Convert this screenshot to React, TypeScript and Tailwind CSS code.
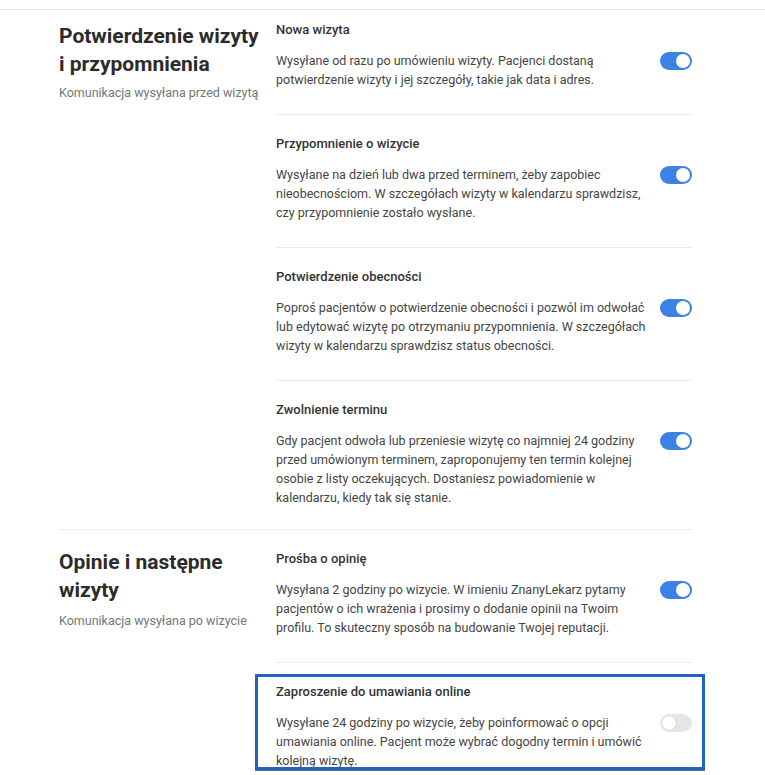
import React from "react";

type Item = { title: string; desc: string; on: boolean; highlight?: boolean };

const Toggle = ({ on }: { on: boolean }) => (
  <div
    className={
      on
        ? "relative mt-[1px] h-[18px] w-[32px] shrink-0 rounded-full bg-[#3b82e4]"
        : "relative mt-[1px] h-[18px] w-[32px] shrink-0 rounded-full bg-[#e3e5e9]"
    }
  >
    <div
      className={
        on
          ? "absolute right-[2px] top-[2px] h-[14px] w-[14px] rounded-full bg-white"
          : "absolute left-[2px] top-[2px] h-[14px] w-[14px] rounded-full bg-white shadow-[0_0_1px_rgba(0,0,0,0.25)]"
      }
    />
  </div>
);

const Row = ({
  item,
  first,
  last,
  sectionLast,
}: {
  item: Item;
  first: boolean;
  last: boolean;
  sectionLast: boolean;
}) => (
  <div
    className={
      (first ? "pt-[10px] " : "pt-[19px] ") +
      (last ? (sectionLast ? "pb-[26px] " : "pb-[22px] ") : "pb-[25px] border-b border-[#ebebeb] ") +
      "relative"
    }
  >
    <div className="text-[13px] leading-[20px] font-medium text-[#333333]">{item.title}</div>
    <div className="mt-[11px] flex items-start justify-between">
      <p className="w-[380px] text-[12.5px] leading-[19px] text-[#454545]">{item.desc}</p>
      <Toggle on={item.on} />
    </div>
    {item.highlight && (
      <div className="pointer-events-none absolute left-[-21px] right-[-13px] top-[11px] h-[96px] border-[3px] border-[#2361c3] shadow-[0_1px_0_#6b6b6b]" />
    )}
  </div>
);

const Section = ({
  title,
  subtitle,
  items,
  first,
}: {
  title: string;
  subtitle: string;
  items: Item[];
  first: boolean;
}) => (
  <div className={first ? "flex" : "flex border-t border-[#ebebeb]"}>
    <div className={first ? "w-[217px] shrink-0 pt-[12px] pr-[12px]" : "w-[217px] shrink-0 pt-[18px] pr-[12px]"}>
      <h2 className="text-[21px] leading-[28px] font-bold text-[#2b2b2b]">{title}</h2>
      <div
        className={
          first
            ? "mt-[5px] whitespace-nowrap text-[12.5px] leading-[20px] text-[#767676]"
            : "mt-[7px] whitespace-nowrap text-[12.5px] leading-[20px] text-[#767676]"
        }
      >
        {subtitle}
      </div>
    </div>
    <div className="w-[416px] shrink-0">
      {items.map((it, i) => (
        <Row
          key={i}
          item={it}
          first={first && i === 0}
          last={i === items.length - 1}
          sectionLast={!first}
        />
      ))}
    </div>
  </div>
);

export default function App() {
  return (
    <div
      className="min-h-[775px] bg-white pt-[9px]"
      style={{ fontFamily: "Roboto, 'Noto Sans', Arial, sans-serif" }}
    >
      <div className="border-t border-[#e3e3e3]">
        <div className="pl-[59px]">
          <div className="w-[633px]">
            <Section
              first
              title="Potwierdzenie wizyty i przypomnienia"
              subtitle="Komunikacja wysyłana przed wizytą"
              items={[
                {
                  title: "Nowa wizyta",
                  desc: "Wysyłane od razu po umówieniu wizyty. Pacjenci dostaną potwierdzenie wizyty i jej szczegóły, takie jak data i adres.",
                  on: true,
                },
                {
                  title: "Przypomnienie o wizycie",
                  desc: "Wysyłane na dzień lub dwa przed terminem, żeby zapobiec nieobecnościom. W szczegółach wizyty w kalendarzu sprawdzisz, czy przypomnienie zostało wysłane.",
                  on: true,
                },
                {
                  title: "Potwierdzenie obecności",
                  desc: "Poproś pacjentów o potwierdzenie obecności i pozwól im odwołać lub edytować wizytę po otrzymaniu przypomnienia. W szczegółach wizyty w kalendarzu sprawdzisz status obecności.",
                  on: true,
                },
                {
                  title: "Zwolnienie terminu",
                  desc: "Gdy pacjent odwoła lub przeniesie wizytę co najmniej 24 godziny przed umówionym terminem, zaproponujemy ten termin kolejnej osobie z listy oczekujących. Dostaniesz powiadomienie w kalendarzu, kiedy tak się stanie.",
                  on: true,
                },
              ]}
            />
            <Section
              first={false}
              title="Opinie i następne wizyty"
              subtitle="Komunikacja wysyłana po wizycie"
              items={[
                {
                  title: "Prośba o opinię",
                  desc: "Wysyłana 2 godziny po wizycie. W imieniu ZnanyLekarz pytamy pacjentów o ich wrażenia i prosimy o dodanie opinii na Twoim profilu. To skuteczny sposób na budowanie Twojej reputacji.",
                  on: true,
                },
                {
                  title: "Zaproszenie do umawiania online",
                  desc: "Wysyłane 24 godziny po wizycie, żeby poinformować o opcji umawiania online. Pacjent może wybrać dogodny termin i umówić kolejną wizytę.",
                  on: false,
                  highlight: true,
                },
              ]}
            />
          </div>
        </div>
      </div>
    </div>
  );
}
